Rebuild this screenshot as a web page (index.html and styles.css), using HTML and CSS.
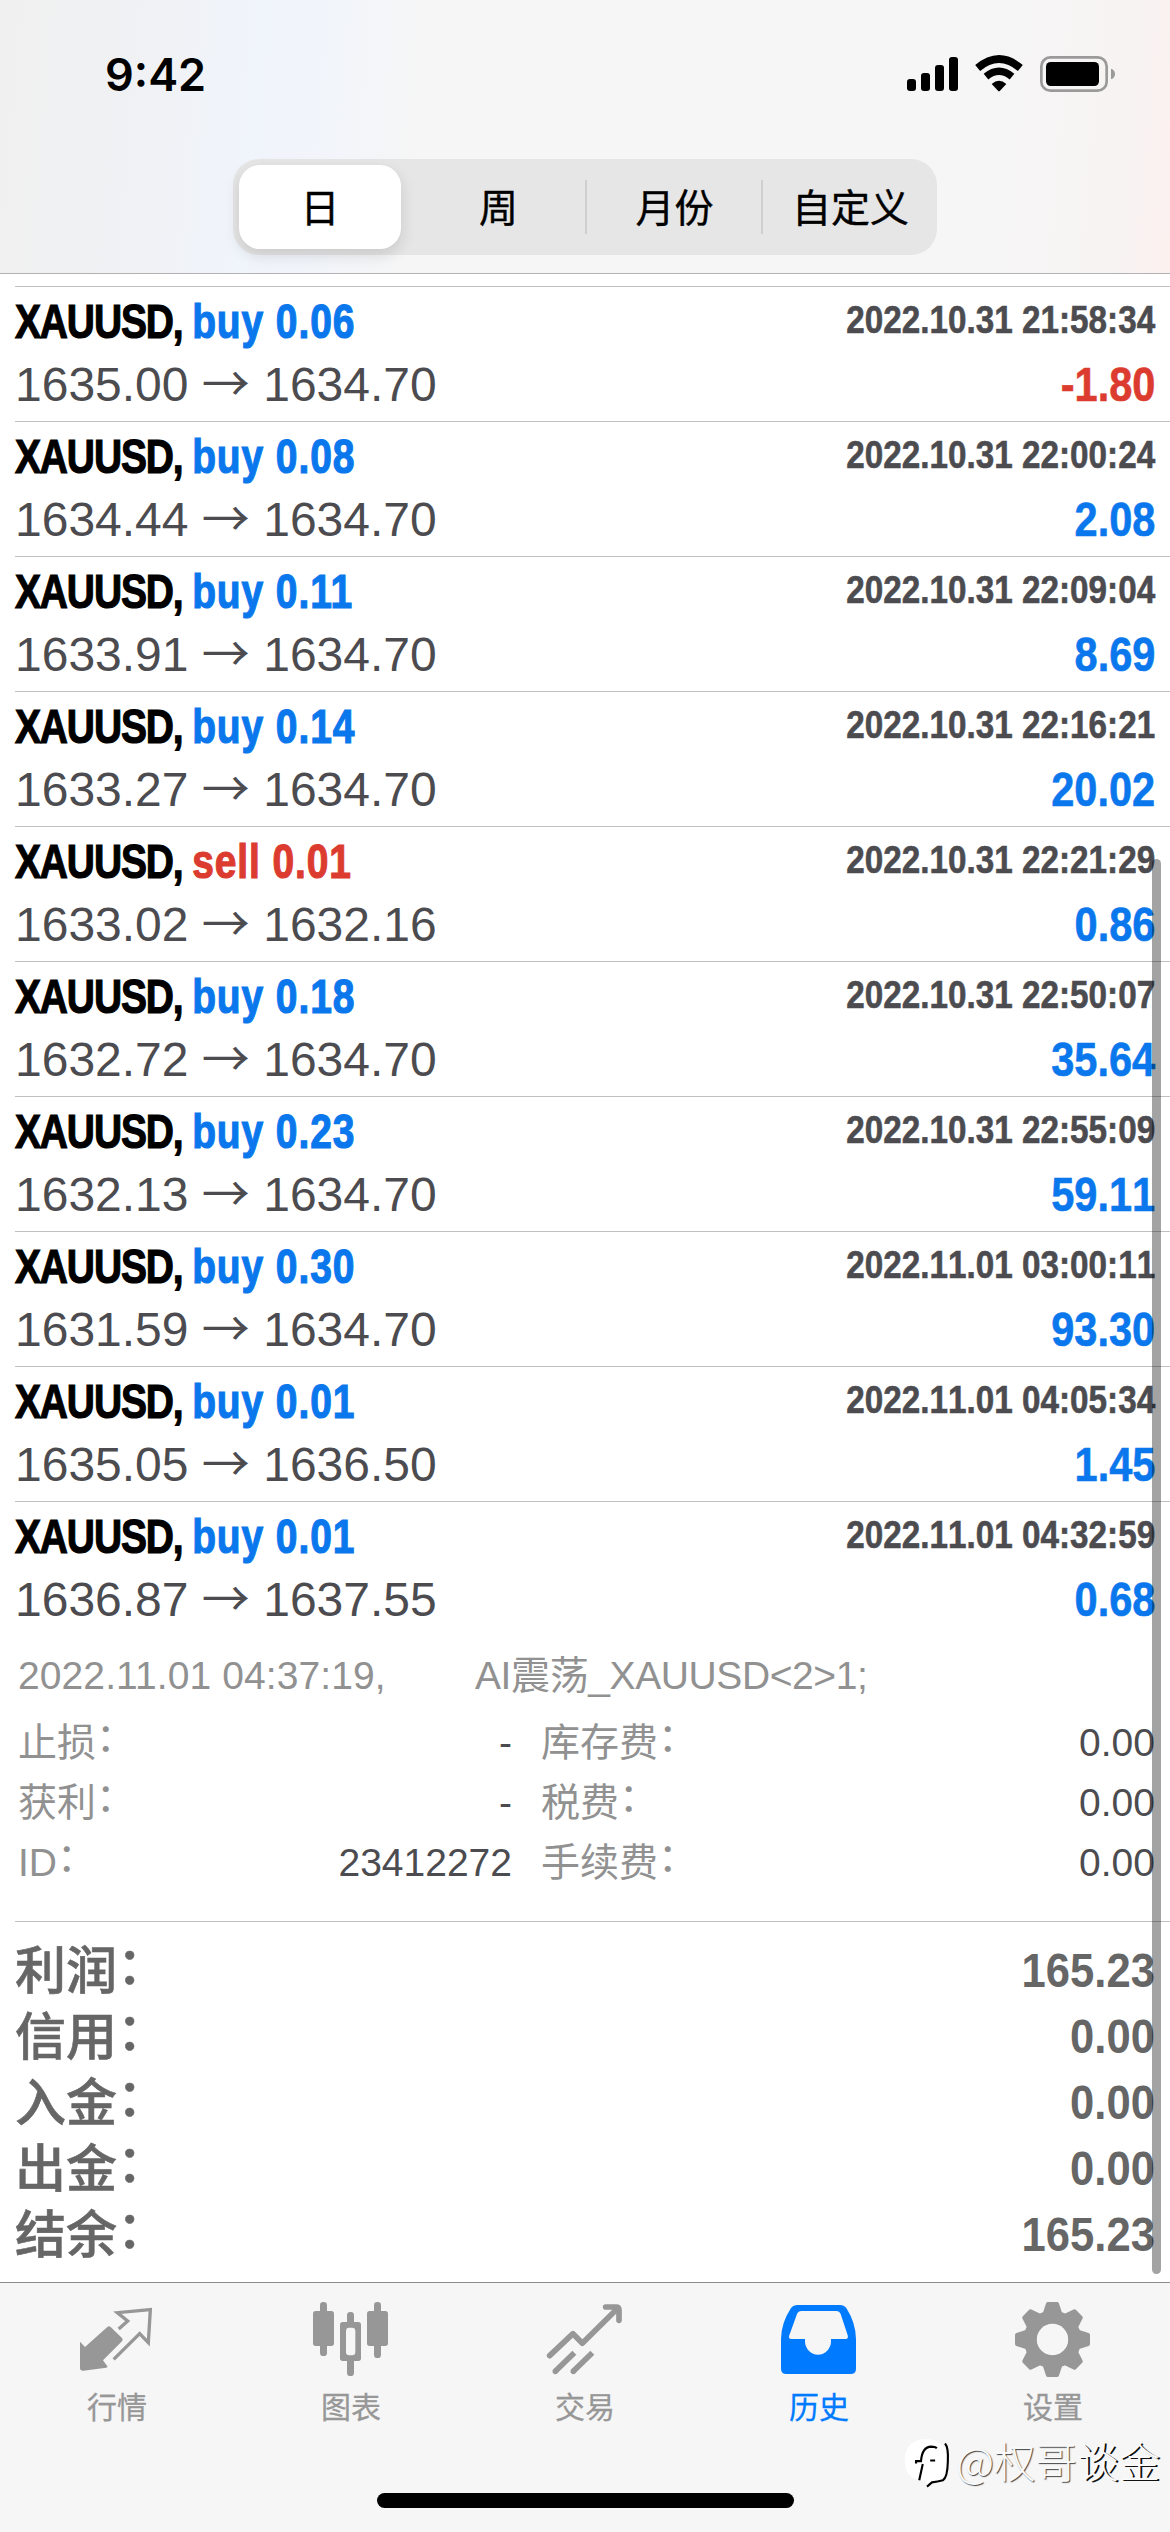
FILE: index.html
```html
<!DOCTYPE html>
<html lang="zh-CN">
<head>
<meta charset="utf-8">
<title>历史</title>
<link rel="stylesheet" href="styles.css">
</head>
<body>
<div class="screen">
  <header class="header">
    <div class="status">
      <span class="time">9:42</span>
      <svg class="status-icons" viewBox="0 0 720 210">
        <rect x="51" y="117" width="27" height="36" rx="9"/>
        <rect x="93" y="99" width="27" height="54" rx="9"/>
        <rect x="135" y="75" width="27" height="78" rx="9"/>
        <rect x="177" y="51" width="27" height="102" rx="9"/>
        <g fill="none" stroke="#000">
          <path d="M263 84Q327 30 391 84" stroke-width="23"/>
          <path d="M288 110Q327 78 366 110" stroke-width="22"/>
        </g>
        <path d="M305 132Q327 113 349 132L330 152Q327 155 324 152Z"/>
        <rect x="454" y="52" width="196" height="100" rx="27" fill="none" stroke="#9a9a9a" stroke-width="8"/>
        <rect x="468" y="66" width="159" height="72" rx="14"/>
        <path d="M663 86Q675 90 675 102Q675 114 663 118Z" fill="#9a9a9a"/>
      </svg>
    </div>
    <nav class="segments">
      <span class="segment selected">日</span>
      <span class="segment">周</span>
      <span class="segment divided">月份</span>
      <span class="segment divided">自定义</span>
    </nav>
  </header>

  <main class="content">
    <section class="deals">
      <article class="deal"><h2>XAUUSD, <span class="buy">buy 0.06</span></h2><time>2022.10.31 21:58:34</time><p>1635.00 <i>→</i> 1634.70</p><b class="loss">-1.80</b></article>
      <article class="deal"><h2>XAUUSD, <span class="buy">buy 0.08</span></h2><time>2022.10.31 22:00:24</time><p>1634.44 <i>→</i> 1634.70</p><b>2.08</b></article>
      <article class="deal"><h2>XAUUSD, <span class="buy">buy 0.11</span></h2><time>2022.10.31 22:09:04</time><p>1633.91 <i>→</i> 1634.70</p><b>8.69</b></article>
      <article class="deal"><h2>XAUUSD, <span class="buy">buy 0.14</span></h2><time>2022.10.31 22:16:21</time><p>1633.27 <i>→</i> 1634.70</p><b>20.02</b></article>
      <article class="deal"><h2>XAUUSD, <span class="sell">sell 0.01</span></h2><time>2022.10.31 22:21:29</time><p>1633.02 <i>→</i> 1632.16</p><b>0.86</b></article>
      <article class="deal"><h2>XAUUSD, <span class="buy">buy 0.18</span></h2><time>2022.10.31 22:50:07</time><p>1632.72 <i>→</i> 1634.70</p><b>35.64</b></article>
      <article class="deal"><h2>XAUUSD, <span class="buy">buy 0.23</span></h2><time>2022.10.31 22:55:09</time><p>1632.13 <i>→</i> 1634.70</p><b>59.11</b></article>
      <article class="deal"><h2>XAUUSD, <span class="buy">buy 0.30</span></h2><time>2022.11.01 03:00:11</time><p>1631.59 <i>→</i> 1634.70</p><b>93.30</b></article>
      <article class="deal"><h2>XAUUSD, <span class="buy">buy 0.01</span></h2><time>2022.11.01 04:05:34</time><p>1635.05 <i>→</i> 1636.50</p><b>1.45</b></article>
      <article class="deal"><h2>XAUUSD, <span class="buy">buy 0.01</span></h2><time>2022.11.01 04:32:59</time><p>1636.87 <i>→</i> 1637.55</p><b>0.68</b></article>
    </section>

    <section class="details">
      <div class="opened"><span>2022.11.01 04:37:19,</span><span class="comment">AI震荡_XAUUSD&lt;2&gt;1;</span></div>
      <dl class="fields">
        <dt>止损<span class="colon">：</span></dt><dd>-</dd><dt>库存费<span class="colon">：</span></dt><dd>0.00</dd>
        <dt>获利<span class="colon">：</span></dt><dd>-</dd><dt>税费<span class="colon">：</span></dt><dd>0.00</dd>
        <dt>ID<span class="colon">：</span></dt><dd>23412272</dd><dt>手续费<span class="colon">：</span></dt><dd>0.00</dd>
      </dl>
    </section>

    <dl class="summary">
      <dt>利润<span class="colon">：</span></dt><dd>165.23</dd>
      <dt>信用<span class="colon">：</span></dt><dd>0.00</dd>
      <dt>入金<span class="colon">：</span></dt><dd>0.00</dd>
      <dt>出金<span class="colon">：</span></dt><dd>0.00</dd>
      <dt>结余<span class="colon">：</span></dt><dd>165.23</dd>
    </dl>
    <div class="scrollbar"></div>
  </main>

  <footer class="tabbar">
    <div class="tab">
      <svg viewBox="54 54 234 240">
        <path d="M60 185L75 201L142 141Q147 136 152 141L186 174Q190 179 186 184L129 241L143 260L139 263L70 272Q60 273 60 264Z" fill="#979797"/>
        <path d="M176 147L203 123L172 98L271 89L265 188L239 161L161 238" fill="none" stroke="#979797" stroke-width="10"/>
      </svg>
      <span>行情</span>
    </div>
    <div class="tab">
      <svg viewBox="756 54 234 240" fill="#979797">
        <rect x="780" y="66" width="21" height="162" rx="10"/>
        <rect x="759" y="93" width="63" height="105" rx="8"/>
        <rect x="942" y="66" width="21" height="168" rx="10"/>
        <rect x="921" y="93" width="63" height="105" rx="8"/>
        <rect x="861" y="96" width="21" height="192" rx="10"/>
        <rect x="840" y="126" width="63" height="117" rx="8"/>
        <rect x="858" y="143" width="28" height="83" rx="10" fill="#f6f6f6"/>
      </svg>
      <span>图表</span>
    </div>
    <div class="tab">
      <svg viewBox="78 54 234 240" fill="none" stroke="#979797" stroke-width="17" stroke-linecap="round" stroke-linejoin="round">
        <path d="M89 227L159 161L187 190L294 84"/>
        <path d="M257 81H288Q297 81 297 90V121"/>
        <path d="M106 274L163 218M160 274L217 218" stroke-linecap="butt"/>
        <path d="M106 274h.1M160 274h.1"/>
      </svg>
      <span>交易</span>
    </div>
    <div class="tab active">
      <svg viewBox="780 54 234 240" fill="#007aff">
        <path fill-rule="evenodd" d="M833 75H960Q972 75 979 84Q1008 130 1008 178V266Q1008 282 992 282H799Q783 282 783 266V178Q783 130 813 84Q820 75 833 75ZM844 93Q835 93 831 102L808 166Q804 177 814 177H855V184A39 40 0 0 0 933 184V177H977Q986 177 983 166L962 102Q958 93 949 93Z"/>
      </svg>
      <span>历史</span>
    </div>
    <div class="tab">
      <svg viewBox="372 54 234 240" fill="#979797">
        <g stroke="#979797" stroke-width="12" stroke-linejoin="round">
          <path d="M474 72H501L512 105H463ZM474 285H501L512 252H463ZM381 165V192L414 203V154ZM594 165V192L561 203V154Z"/>
          <path transform="rotate(45 487.500 178.500)" d="M474 72H501L512 105H463ZM474 285H501L512 252H463ZM381 165V192L414 203V154ZM594 165V192L561 203V154Z"/>
        </g>
        <circle cx="487.500" cy="178.500" r="66" fill="none" stroke="#979797" stroke-width="40"/>
        <circle cx="487.500" cy="178.500" r="47" fill="#f6f6f6"/>
      </svg>
      <span>设置</span>
    </div>
    <div class="home-bar"></div>
    <div class="watermark">
      <svg viewBox="45 490 140 150">
        <path d="M112 502C150 502 174 522 174 565C174 610 160 622 130 626L116 636L112 620C70 618 52 600 52 563C52 522 74 502 112 502Z" fill="#fff"/>
        <g fill="none" stroke="#000" stroke-width="6">
          <path d="M84 571V564H98Q101 524 127 523Q138 523 143 527M103 572L93 618M124 562H138"/>
          <path d="M166 514Q176 525 174 565Q173 610 160 618Q145 622 129 624L115 636"/>
        </g>
      </svg>
      <span>@权哥<em>谈金</em></span>
    </div>
  </footer>
</div>
</body>
</html>
```
FILE: styles.css
```css
* { box-sizing: border-box; margin: 0; padding: 0; }

body {
  font-family: "Liberation Sans", "Noto Sans CJK SC", sans-serif;
  background: #fff;
}

.screen {
  display: flex;
  flex-direction: column;
  width: 1170px;
  height: 2532px;
  overflow: hidden;
}

.header {
  height: 274px;
  border-bottom: 1px solid #b2b2b2;
  background: linear-gradient(95deg, #f0f0f0 0, #f0f1f3 10%, #f0f4fb 22%, #f2f5fa 29%, #f6f6f6 36%, #f6f6f6 82%, #f7f3f3 95%, #fbf1ef 100%);
}

.status {
  display: flex;
  justify-content: space-between;
  height: 159px;
  padding: 40px 40px 0 105px;
}

.time {
  font: 600 45px/70px Inter, sans-serif;
}

.status-icons { width: 240px; height: 70px; }

.segments {
  display: grid;
  grid-template-columns: repeat(4, 1fr);
  width: 704px;
  height: 96px;
  margin: 0 auto;
  padding: 6px 0;
  border-radius: 26px;
  background: #e6e6e7;
}

.segment {
  display: flex;
  align-items: center;
  justify-content: center;
  padding: 0 0 4px 3px;
  font: 400 39px/1 "Noto Sans CJK SC", sans-serif;
  -webkit-text-stroke: .4px #000;
}

.segment.selected {
  margin: 0 8px 0 6px;
  padding-left: 0;
  border-radius: 21px;
  background: #fff;
  box-shadow: 0 6px 16px rgba(0, 0, 0, .13);
}

.segment.divided {
  background: linear-gradient(#cfcfd1, #cfcfd1) left center / 2px 54px no-repeat;
}

.content {
  position: relative;
  flex: 1;
  padding-top: 12px;
  background: #fff;
}

.deal {
  display: grid;
  grid-template-columns: 1fr auto;
  grid-template-rows: 60px 60px;
  row-gap: 3px;
  height: 135px;
  margin-left: 15px;
  padding: 5px 15px 0 0;
  border-top: 1px solid #c0c0c0;
  line-height: 60px;
}

/* Condensed bold faces: the regular-width bold narrowed towards its own edge */
.deal h2 {
  font-size: 48px;
  letter-spacing: -1.4px;
  white-space: nowrap;
  -webkit-text-stroke: 1.2px;
  transform: scaleX(.812);
  transform-origin: left;
}

.deal h2 span { letter-spacing: 1.1px; }

.deal time,
.deal b {
  justify-self: end;
  font-weight: 700;
  font-kerning: none;
  white-space: nowrap;
  transform-origin: right;
  -webkit-text-stroke: .6px;
}

.deal time {
  font-size: 39px;
  line-height: 56px;
  color: #4c4c50;
  transform: scaleX(.853);
}

.deal b {
  font-size: 48px;
  color: #0a78ec;
  transform: scaleX(.865);
}

.deal p {
  font-size: 48px;
  color: #4c4c50;
}

.deal i {
  display: inline-block;
  width: 48px;
  font: 48px/1 "Noto Sans CJK SC", sans-serif;
}

.deal .buy { color: #0a78ec; }
.deal .sell, .deal .loss { color: #dc3c30; }

.details {
  height: 285px;
  padding: 15px 15px 0 18px;
  font-size: 39px;
  color: #919191;
}

.opened {
  display: grid;
  grid-template-columns: 457px 1fr;
  line-height: 50px;
  margin-bottom: 12px;
  letter-spacing: .1px;
}

.comment { letter-spacing: -.4px; }

.fields {
  display: grid;
  grid-template-columns: 200px 294px 200px 1fr;
  grid-auto-rows: 60px;
  line-height: 60px;
}

.fields dd { text-align: right; color: #4c4c50; }
.fields dt:nth-of-type(even) { padding-left: 29px; }

.colon { line-height: 1; vertical-align: 5px; }

.summary {
  display: grid;
  grid-template-columns: 1fr 1fr;
  grid-auto-rows: 66px;
  margin-left: 15px;
  padding: 15px 15px 0 0;
  border-top: 1px solid #c0c0c0;
  line-height: 66px;
  color: #666;
}

.summary dt {
  margin-top: -3px;
  font-family: "Noto Sans CJK SC", sans-serif;
  font-size: 51px;
  font-weight: 500;
  -webkit-text-stroke: .6px;
}

.summary dd {
  font-size: 49px;
  font-weight: 700;
  text-align: right;
  transform: scaleX(.89);
  transform-origin: right;
}

.scrollbar {
  position: absolute;
  top: 585px;
  right: 9px;
  bottom: 8px;
  width: 9px;
  border-radius: 5px;
  background: rgba(0, 0, 0, .36);
}

.tabbar {
  position: relative;
  display: grid;
  grid-template-columns: repeat(5, 1fr);
  height: 250px;
  padding-top: 15px;
  border-top: 1px solid #8c8c8c;
  background: #f6f6f6;
}

.tab {
  display: flex;
  flex-direction: column;
  align-items: center;
  gap: 7px;
  font: 400 30px/40px "Noto Sans CJK SC", sans-serif;
  color: #979797;
  -webkit-text-stroke: .3px;
}

.tab svg { width: 78px; height: 80px; }
.tab.active { color: #007aff; }

.home-bar {
  position: absolute;
  left: 377px;
  bottom: 24px;
  width: 417px;
  height: 15px;
  border-radius: 8px;
  background: #000;
}

.watermark {
  position: absolute;
  right: 10px;
  bottom: 44px;
  display: flex;
  align-items: center;
  gap: 4px;
  font: 300 41.5px/54px "Noto Sans CJK SC", sans-serif;
  color: #fafafa;
  text-shadow: 1px 1px 1px #444;
}

.watermark svg { width: 50px; height: 53px; margin-top: 4px; }
.watermark em { font-style: normal; text-shadow: 2px 1px 0 #111; }
```
